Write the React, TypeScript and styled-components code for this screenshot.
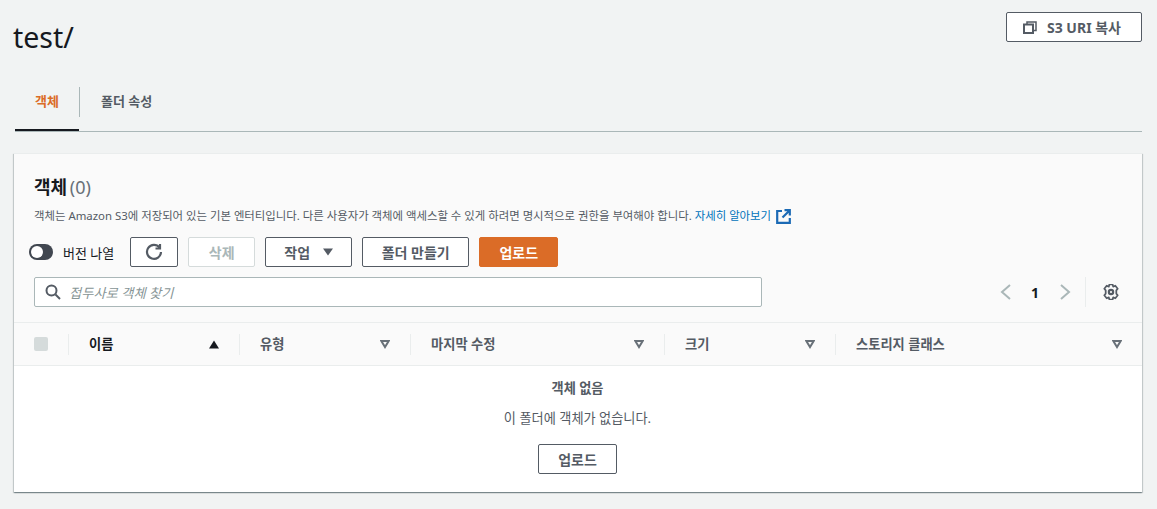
import React from 'react';
import styled, { createGlobalStyle } from 'styled-components';

const GlobalStyle = createGlobalStyle`
  html, body {
    margin: 0;
    padding: 0;
    background: #f1f3f3;
    color: #16191f;
    font-family: "Noto Sans", "Noto Sans CJK KR", sans-serif;
    font-size: 12px;
  }
  * { box-sizing: border-box; }
`;

const columns = [
  { label: '이름', width: 171, sorted: true },
  { label: '유형', width: 171, sorted: false },
  { label: '마지막 수정', width: 254, sorted: false },
  { label: '크기', width: 171, sorted: false },
  { label: '스토리지 클래스', width: 307, sorted: false },
];

const SortIcon = ({ sorted }: { sorted: boolean }) => (
  <svg width="10" height="9" viewBox="0 0 10 9">
    {sorted
      ? <path d="M5 0.5 L10 8.5 H0 Z" fill="#16191f" />
      : <path d="M1.3 1 H8.7 L5 7 Z" fill="none" stroke="#687078" strokeWidth="2" />}
  </svg>
);

export default function App() {
  return <>
    <GlobalStyle />
    <Page>
      <TitleRow>
        <Title>test/</Title>
        <CopyButton>
          <svg width="14" height="13" viewBox="0 0 14 13" fill="none" stroke="#545b64" strokeWidth="2">
            <rect x="1" y="3.5" width="9" height="8.5" />
            <path d="M4 3.5 V1 H13 V9.5 H10" strokeWidth="1.5" />
          </svg>
          S3 URI 복사
        </CopyButton>
      </TitleRow>

      <Tabs>
        <Tab $active>객체</Tab>
        <TabDivider />
        <Tab>폴더 속성</Tab>
      </Tabs>

      <Card>
        <CardHeader>
          <Heading>객체 <Count>(0)</Count></Heading>
          <Description>
            객체는 Amazon S3에 저장되어 있는 기본 엔터티입니다. 다른 사용자가 객체에 액세스할 수 있게 하려면 명시적으로 권한을 부여해야 합니다.{' '}
            <DocLink>자세히 알아보기</DocLink>
            <svg width="15" height="15" viewBox="0 0 15 15" fill="none" stroke="#1b6ab5" strokeWidth="2.2" style={{ marginLeft: 5, verticalAlign: -4 }}>
              <path d="M6 2 H1.2 V13.8 H13.8 V9" />
              <path d="M8.5 1.2 H13.8 V6.5 M13.8 1.2 L6.5 8.5" />
            </svg>
          </Description>
          <Toolbar>
            <Toggle><ToggleKnob /></Toggle>
            <ToggleLabel>버전 나열</ToggleLabel>
            <Button $width={48}>
              <svg width="18" height="18" viewBox="0 0 18 18" fill="none" stroke="#545b64" strokeWidth="2.2">
                <path d="M14.5 4.5 A7 7 0 1 0 16 9" />
                <path d="M15 1 V5.5 H10.5" />
              </svg>
            </Button>
            <Button $width={67} $disabled>삭제</Button>
            <Button $width={87}>
              작업
              <svg width="10" height="8" viewBox="0 0 10 8" style={{ marginLeft: 13 }}>
                <path d="M0 0.5 H10 L5 7.5 Z" fill="#545b64" />
              </svg>
            </Button>
            <Button $width={107}>폴더 만들기</Button>
            <Button $width={79} $primary>업로드</Button>
          </Toolbar>
          <SearchRow>
            <SearchBox>
              <svg width="16" height="16" viewBox="0 0 16 16" fill="none" stroke="#545b64" strokeWidth="2">
                <circle cx="6.5" cy="6.5" r="5" />
                <path d="M10.5 10.5 L15 15" />
              </svg>
              <Placeholder>접두사로 객체 찾기</Placeholder>
            </SearchBox>
            <Pager>
              <svg width="12" height="18" viewBox="0 0 12 18" fill="none" stroke="#aab7b8" strokeWidth="2">
                <path d="M10 2 L2 9 L10 16" />
              </svg>
              <PageNumber>1</PageNumber>
              <svg width="12" height="18" viewBox="0 0 12 18" fill="none" stroke="#aab7b8" strokeWidth="2">
                <path d="M2 2 L10 9 L2 16" />
              </svg>
              <PagerDivider />
              <svg width="16" height="16" viewBox="0.6 0.6 14.8 14.8" fill="none" stroke="#545b64" strokeWidth="2">
                <circle cx="8" cy="8" r="2" />
                <path d="M6.5 1 H9.5 L10 3 L12 2.2 L14.2 5 L12.9 6.5 V9.5 L14.2 11 L12 13.8 L10 13 L9.5 15 H6.5 L6 13 L4 13.8 L1.8 11 L3.1 9.5 V6.5 L1.8 5 L4 2.2 L6 3 Z" strokeWidth="1.6" strokeLinejoin="round" />
              </svg>
            </Pager>
          </SearchRow>
        </CardHeader>

        <TableHead>
          <CheckCell><Checkbox /></CheckCell>
          {columns.map((col) => (
            <HeadCell key={col.label} style={{ width: col.width }}>
              <HeadLabel $sorted={col.sorted}>{col.label}</HeadLabel>
              <SortIcon sorted={col.sorted} />
            </HeadCell>
          ))}
        </TableHead>

        <Empty>
          <EmptyTitle>객체 없음</EmptyTitle>
          <EmptyText>이 폴더에 객체가 없습니다.</EmptyText>
          <Button $width={79}>업로드</Button>
        </Empty>
      </Card>
    </Page>
  </>;
}

const Page = styled.div`
  width: 1157px;
  height: 509px;
  padding: 12px 15px 0 14px;
  overflow: hidden;
`;

const TitleRow = styled.div`
  display: flex;
  justify-content: space-between;
  align-items: flex-start;
  height: 75px;
`;

const Title = styled.h1`
  margin: 5px 0 0 -1px;
  font-size: 28.5px;
  line-height: 40px;
  font-weight: 400;
  color: #16191f;
`;

const Button = styled.button<{ $width: number; $primary?: boolean; $disabled?: boolean }>`
  display: inline-flex;
  align-items: center;
  justify-content: center;
  width: ${(p) => p.$width}px;
  height: 30px;
  padding: 0;
  border-radius: 2px;
  border: 1px solid ${(p) => (p.$primary ? '#db6c27' : p.$disabled ? '#d5dbdb' : '#545b64')};
  background: ${(p) => (p.$primary ? '#db6c27' : '#fff')};
  color: ${(p) => (p.$primary ? '#fff' : p.$disabled ? '#aab7b8' : '#545b64')};
  font-family: inherit;
  font-size: 14px;
  font-weight: 700;
`;

const CopyButton = styled(Button).attrs({ $width: 136 })`
  gap: 10px;
  padding-right: 4px;
`;

const Tabs = styled.div`
  display: flex;
  align-items: flex-start;
  height: 45px;
  border-bottom: 1px solid #aab7b8;
  margin-left: 1px;
`;

const Tab = styled.div<{ $active?: boolean }>`
  height: 44px;
  padding: 0 ${(p) => (p.$active ? '20px' : '21px')};
  line-height: 29px;
  font-size: 13px;
  font-weight: 700;
  color: ${(p) => (p.$active ? '#db6c27' : '#545b64')};
  border-bottom: ${(p) => (p.$active ? '2px solid #16191f' : 'none')};
`;

const TabDivider = styled.div`
  width: 1px;
  height: 30px;
  background: #aab7b8;
`;

const Card = styled.section`
  margin-top: 21px;
  height: 339px;
  display: flex;
  flex-direction: column;
  background: #fff;
  border-top: 1px solid #eaeded;
  box-shadow: 0 1px 1px 0 rgba(0, 28, 36, 0.3), 1px 1px 1px 0 rgba(0, 28, 36, 0.15), -1px 1px 1px 0 rgba(0, 28, 36, 0.15);
`;

const CardHeader = styled.div`
  background: #fafafa;
  padding: 20px 20px 0;
  height: 169px;
  border-bottom: 1px solid #eaeded;
`;

const Heading = styled.h2`
  margin: 0;
  font-size: 18px;
  line-height: 26px;
  font-weight: 700;
  word-spacing: -2px;
`;

const Count = styled.span`
  font-weight: 400;
  color: #687078;
`;

const Description = styled.p`
  margin: 7px 0 0;
  font-size: 11.4px;
  line-height: 18px;
  color: #545b64;
  white-space: nowrap;
`;

const DocLink = styled.span`
  color: #0073bb;
`;

const Toolbar = styled.div`
  display: flex;
  align-items: center;
  margin: 12px 0 0 -5px;
`;

const Toggle = styled.div`
  width: 24px;
  height: 16px;
  padding: 2px;
  border-radius: 8px;
  background: #414750;
  display: flex;
`;

const ToggleKnob = styled.div`
  width: 12px;
  height: 12px;
  border-radius: 50%;
  background: #fff;
`;

const ToggleLabel = styled.span`
  margin: 0 16px 0 10px;
  font-size: 13px;
  color: #16191f;

  & ~ button { margin-right: 10px; }
`;

const SearchRow = styled.div`
  display: flex;
  align-items: center;
  justify-content: space-between;
  margin-top: 10px;
`;

const SearchBox = styled.div`
  display: flex;
  align-items: center;
  gap: 8px;
  width: 728px;
  height: 30px;
  padding: 0 10px;
  background: #fff;
  border: 1px solid #aab7b8;
  border-radius: 2px;
`;

const Placeholder = styled.span`
  font-size: 13.25px;
  font-style: italic;
  color: #879596;
`;

const Pager = styled.div`
  display: flex;
  align-items: center;
  margin-right: 3px;
`;

const PageNumber = styled.span`
  margin: 0 20px 0 19px;
  font-size: 14px;
  font-weight: 700;
`;

const PagerDivider = styled.div`
  width: 1px;
  height: 30px;
  margin: 0 17px 0 14px;
  background: #eaeded;
`;

const TableHead = styled.div`
  display: flex;
  align-items: center;
  height: 43px;
  background: #fafafa;
  border-bottom: 1px solid #eaeded;
`;

const CheckCell = styled.div`
  width: 54px;
  padding-left: 20px;
  flex: none;
`;

const Checkbox = styled.div`
  width: 14px;
  height: 14px;
  border-radius: 2px;
  background: #d5dbdb;
`;

const HeadCell = styled.div`
  display: flex;
  flex: none;
  align-items: center;
  justify-content: space-between;
  height: 21px;
  padding: 0 20px;
  border-left: 1px solid #eaeded;
`;

const HeadLabel = styled.span<{ $sorted: boolean }>`
  position: relative;
  top: -1px;
  font-size: 13.25px;
  font-weight: 700;
  color: ${(p) => (p.$sorted ? '#16191f' : '#545b64')};
`;

const Empty = styled.div`
  flex: 1;
  display: flex;
  flex-direction: column;
  align-items: center;
  padding: 12px 1px 0 0;
  background: #fff;
`;

const EmptyTitle = styled.div`
  font-size: 13.2px;
  line-height: 20px;
  font-weight: 700;
  color: #545b64;
`;

const EmptyText = styled.div`
  margin: 10px 0 16px;
  font-size: 13.2px;
  line-height: 20px;
  color: #545b64;
`;
